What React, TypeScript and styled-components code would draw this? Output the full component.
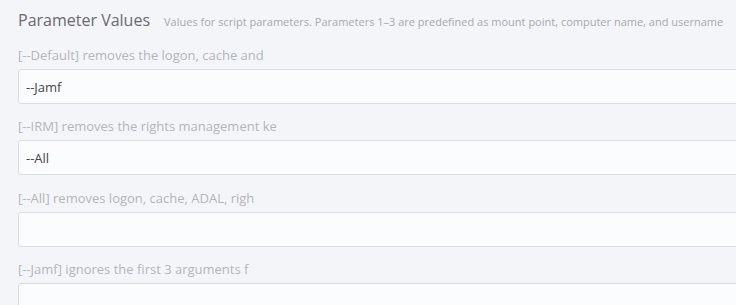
import React from 'react'
import styled, { createGlobalStyle } from 'styled-components'

const GlobalStyle = createGlobalStyle`
  html, body {
    margin: 0;
    padding: 0;
    background: #f4f5f8;
    overflow: hidden;
  }
  body {
    font-family: "Open Sans", "Liberation Sans", sans-serif;
  }
`

const Section = styled.section`
  padding: 9px 0 0 18px;
  width: 760px;
`

const Header = styled.div`
  display: flex;
  align-items: baseline;
  gap: 14px;
  margin-bottom: 16px;
`

const Title = styled.h2`
  margin: 0;
  font-size: 16px;
  font-weight: 400;
  color: #6a6a70;
  white-space: nowrap;
`

const Hint = styled.span`
  font-size: 11px;
  color: #a9a9ae;
  white-space: nowrap;
`

const Field = styled.div`
  display: flex;
  flex-direction: column;
  gap: 6px;
  margin-bottom: 14.4px;
`

const Label = styled.label`
  font-size: 13px;
  line-height: 16px;
  color: #b5b5ba;
  white-space: nowrap;
`

const Input = styled.input`
  box-sizing: border-box;
  height: 35px;
  width: 100%;
  padding: 0 7px;
  border: 1px solid #dcdde1;
  border-radius: 3px;
  background: #fbfcfd;
  font-family: inherit;
  font-size: 13px;
  color: #45454a;
  outline: none;
`

const params = [
  { label: '[--Default] removes the logon, cache and', value: '--Jamf' },
  { label: '[--IRM] removes the rights management ke', value: '--All' },
  { label: '[--All] removes logon, cache, ADAL, righ', value: '' },
  { label: '[--Jamf] ignores the first 3 arguments f', value: '' },
]

const App = () => {
  return (
    <>
      <GlobalStyle />
      <Section>
        <Header>
          <Title>Parameter Values</Title>
          <Hint>
            Values for script parameters. Parameters 1–3 are predefined as mount point, computer name, and username
          </Hint>
        </Header>
        {params.map((p, i) => (
          <Field key={i}>
            <Label>{p.label}</Label>
            <Input defaultValue={p.value} />
          </Field>
        ))}
      </Section>
    </>
  )
}

export default App
